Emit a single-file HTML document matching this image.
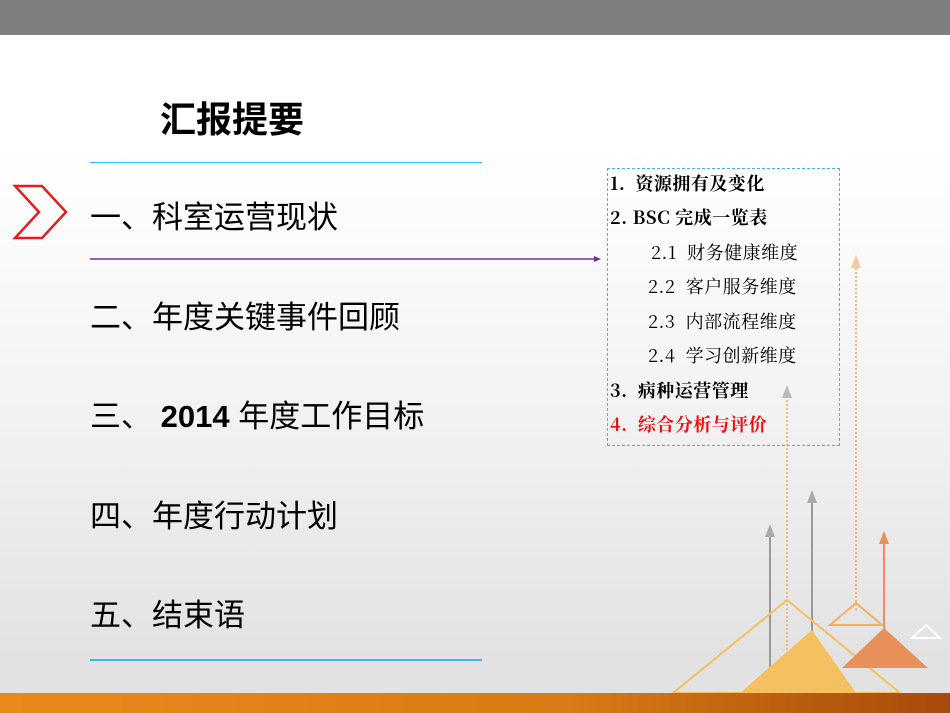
<!DOCTYPE html>
<html><head><meta charset="utf-8"><style>
body{margin:0;width:950px;height:713px;overflow:hidden;position:relative;font-family:"Liberation Sans","Noto Sans CJK SC",sans-serif;background:linear-gradient(#fff 0px,#fff 150px,#f3f3f3 400px,#e2e2e2 660px);}
.top{position:absolute;left:0;top:0;width:950px;height:35px;background:#7f7f7f;}
.bot{position:absolute;left:0;top:693px;width:950px;height:20px;background:linear-gradient(90deg,#e88a1a,#d87a15 60%,#a84a0a);}
.t{position:absolute;white-space:nowrap;color:#000;}
.item{font-size:31px;left:90px;}
.ln{position:absolute;left:90px;width:392px;height:1px;}
.box{position:absolute;left:607px;top:168px;width:231px;height:276px;border:1px dashed #4fb0e0;}
.s{font-family:"Noto Serif CJK SC","Liberation Serif",serif;font-size:18px;letter-spacing:0.5px;}
.b{font-weight:bold;}
</style></head><body>
<div class="top"></div>
<svg style="position:absolute;left:0;top:0" width="950" height="713">
<g fill="none" stroke-width="2">
<line x1="770" y1="690" x2="770" y2="530" stroke="#999"/><polygon points="765,537 770,524 775,537" fill="#aaa" stroke="none"/>
<line x1="812" y1="690" x2="812" y2="500" stroke="#999"/><polygon points="807,503 812,490 817,503" fill="#aaa" stroke="none"/>
<line x1="787" y1="690" x2="787" y2="395" stroke="#e8c07a" stroke-dasharray="2,2"/><polygon points="782,398 787,385 792,398" fill="#bbb" stroke="none"/>
<line x1="856" y1="610" x2="856" y2="265" stroke="#f0b87a" stroke-dasharray="2,2"/><polygon points="851,268 856,255 861,268" fill="#f3c89a" stroke="none"/>
<line x1="884" y1="640" x2="884" y2="540" stroke="#e8905a"/><polygon points="879,544 884,531 889,544" fill="#e8905a" stroke="none"/>
<polygon points="673,693 787,600 900,693" stroke="#f5c060"/>
<polygon points="830,625 856,603 882,625" stroke="#f0b060"/>
</g>
<polygon points="740,693 812,630 856,693" fill="#f5c060"/>
<polygon points="842,668 884,628 928,668" fill="#e8905a"/>
<polygon points="912,638 926,625 940,638" fill="none" stroke="#fff" stroke-width="2"/>
<polygon points="15,186 42,186 66,212 42,238 15,238 39,212" fill="none" stroke="#e02020" stroke-width="2.5"/>
<line x1="90" y1="259" x2="595" y2="259" stroke="#7030a0" stroke-width="1.5"/>
<polygon points="594,256 601,259 594,262" fill="#7030a0"/>
</svg>
<div class="bot"></div>
<div class="t b" style="left:160px;top:91px;font-size:36px;">汇报提要</div>
<div class="ln" style="top:162px;background:#40b8e0"></div>
<div class="t item" style="top:192px;">一、科室运营现状</div>
<div class="t item" style="top:292px;">二、年度关键事件回顾</div>
<div class="t item" style="top:391px;">三、 <b>2014</b> 年度工作目标</div>
<div class="t item" style="top:491px;">四、年度行动计划</div>
<div class="t item" style="top:590px;">五、结束语</div>
<div class="ln" style="top:659px;background:#40b8e0;height:2px"></div>
<div class="box"></div>
<div class="t s b" style="left:610px;top:170px;">1.&nbsp; 资源拥有及变化</div>
<div class="t s b" style="left:610px;top:204px;">2. BSC 完成一览表</div>
<div class="t s" style="left:651px;top:239px;">2.1&nbsp; 财务健康维度</div>
<div class="t s" style="left:648px;top:273px;">2.2&nbsp; 客户服务维度</div>
<div class="t s" style="left:648px;top:308px;">2.3&nbsp; 内部流程维度</div>
<div class="t s" style="left:648px;top:342px;">2.4&nbsp; 学习创新维度</div>
<div class="t s b" style="left:610px;top:377px;">3.&nbsp; 病种运营管理</div>
<div class="t s b" style="left:610px;top:411px;color:#e81010;">4.&nbsp; 综合分析与评价</div>
</body></html>
